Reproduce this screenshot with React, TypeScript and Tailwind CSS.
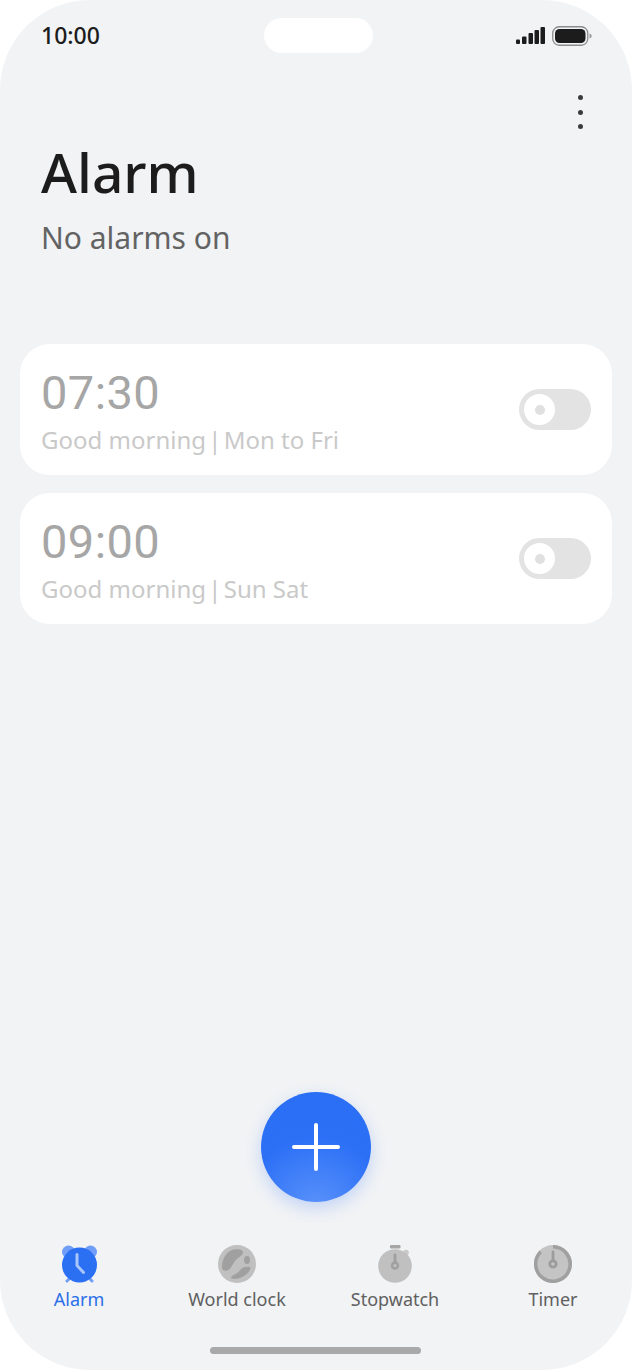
import React from "react"

const font = "font-['Noto_Sans',sans-serif]"

const StatusIcons = () => (
  <div className="flex items-center gap-[7px]">
    <svg width="29" height="17" viewBox="0 0 29 17" fill="#1c1c1c">
      <rect x="0" y="12.5" width="4" height="4.5" rx="1" />
      <rect x="6" y="9.5" width="4.5" height="7.5" rx="1" />
      <rect x="12.5" y="6" width="4.5" height="11" rx="1" />
      <rect x="18.5" y="3" width="4.5" height="14" rx="1" />
      <rect x="24.5" y="0" width="4.5" height="17" rx="1" />
    </svg>
    <svg width="40" height="20" viewBox="0 0 40 20">
      <rect x="0.75" y="0.75" width="35" height="18.5" rx="6.5" fill="none" stroke="#8b8b8b" strokeWidth="1.3" />
      <rect x="3" y="3" width="30.5" height="14" rx="4.5" fill="#1c1c1c" />
      <path d="M37.5 7.5c1.5.4 2.2 1.3 2.2 2.5s-.7 2.1-2.2 2.5z" fill="#9a9a9a" />
    </svg>
  </div>
)

const Toggle = () => (
  <div className="w-[72px] h-[41px] rounded-full bg-[#e3e3e3] flex items-center pl-[5px]">
    <div className="w-[31px] h-[31px] rounded-full bg-white flex items-center justify-center">
      <div className="w-[10px] h-[10px] rounded-full bg-[#e0e0e0]" />
    </div>
  </div>
)

const AlarmCard = ({ time, title, days }: { time: string; title: string; days: string }) => (
  <div className="h-[131px] rounded-[30px] bg-white pl-[21px] pr-[21px] flex items-center justify-between">
    <div className="flex flex-col pt-[3px]">
      <span className="text-[47px] leading-[52px] text-[#a6a6a6] font-['Roboto',sans-serif] font-[450] tracking-[0.4px]">
        {time}
      </span>
      <span className="mt-[6px] text-[24px] leading-[30px] text-[#c9c9c9]">
        {title}
        <span className="[word-spacing:-4px]"> | </span>
        {days}
      </span>
    </div>
    <Toggle />
  </div>
)

const AlarmIcon = () => (
  <svg width="38" height="38" viewBox="0 0 38 38">
    <circle cx="8.5" cy="7" r="6.5" fill="#6f9df8" />
    <circle cx="30.5" cy="7" r="6.5" fill="#6f9df8" />
    <path d="M7 36l4-4M32 36l-4-4" stroke="#6f9df8" strokeWidth="3" strokeLinecap="round" />
    <circle cx="19.5" cy="20" r="17.5" fill="#2b6ff2" />
    <path d="M17 9.5v11l6.5 7" fill="none" stroke="#a9c6fb" strokeWidth="3" strokeLinecap="round" strokeLinejoin="round" />
  </svg>
)

const GlobeIcon = () => (
  <svg width="38" height="38" viewBox="0 0 38 38">
    <circle cx="19" cy="19" r="19" fill="#c0c0c0" />
    <path d="M4 22C4 13 9 6 16 4.5C20 3.8 25 4.5 25 7C25 11 20 12 17 16C14 20 13 24 9.500 25.5C6 26.5 4 25 4 22z" fill="#a0a0a0" />
    <ellipse cx="29" cy="15" rx="3" ry="4" fill="#a0a0a0" />
    <path d="M13 32.5C15 29 19 29 21 26.5C23 24 24 22.5 27 22C30 21.5 33 21.5 32.5 23.5C31 28 27 31 22 33C19 34 13 34.5 13 32.5z" fill="#a0a0a0" />
  </svg>
)

const StopwatchIcon = () => (
  <svg width="38" height="38" viewBox="0 0 38 38">
    <rect x="14" y="0" width="10.5" height="3.5" rx="1" fill="#a6a6a6" />
    <circle cx="30" cy="7.5" r="2.8" fill="#c9c9c9" />
    <circle cx="19" cy="21" r="16.8" fill="#c0c0c0" />
    <path d="M19 10v8" stroke="#a0a0a0" strokeWidth="2.8" strokeLinecap="round" />
    <circle cx="19" cy="20.5" r="3" fill="none" stroke="#a0a0a0" strokeWidth="2.5" />
  </svg>
)

const TimerIcon = () => (
  <svg width="38" height="38" viewBox="0 0 38 38">
    <circle cx="19" cy="19" r="19" fill="#c4c4c4" />
    <path d="M19 1.8a17.2 17.2 0 1 1-12.2 5" fill="none" stroke="#a0a0a0" strokeWidth="3.5" />
    <path d="M19 7v10" stroke="#9c9c9c" strokeWidth="2.8" strokeLinecap="round" />
    <circle cx="19" cy="19" r="3.2" fill="#c4c4c4" stroke="#9c9c9c" strokeWidth="2.8" />
  </svg>
)

const tabs = [
  { label: "Alarm", icon: <AlarmIcon />, color: "text-[#2b6fe8]" },
  { label: "World clock", icon: <GlobeIcon />, color: "text-[#606060]" },
  { label: "Stopwatch", icon: <StopwatchIcon />, color: "text-[#606060]" },
  { label: "Timer", icon: <TimerIcon />, color: "text-[#606060]" },
]

export default function App() {
  return (
    <div className={`w-[632px] h-[1370px] bg-white overflow-hidden ${font}`}>
      <div className="h-full rounded-[90px] bg-[#f1f3f5] flex flex-col">
        {/* status bar */}
        <div className="pt-[18px] pl-[41px] pr-[40px] grid grid-cols-[223px_109px_1fr] items-center">
          <span className="text-[23px] leading-[35px] text-[#1c1c1c] font-medium">10:00</span>
          <div className="h-[35px] rounded-full bg-white" />
          <div className="flex justify-end">
            <StatusIcons />
          </div>
        </div>

        <div className="flex justify-end pr-[49px] mt-[42px]">
          <div className="flex flex-col gap-[9.5px]">
            <div className="w-[5px] h-[5px] rounded-full bg-[#3b3b3b]" />
            <div className="w-[5px] h-[5px] rounded-full bg-[#3b3b3b]" />
            <div className="w-[5px] h-[5px] rounded-full bg-[#3b3b3b]" />
          </div>
        </div>

        <div className="pl-[41px] mt-[11px]">
          <h1 className="text-[55px] leading-[64px] text-[#1c1c1c] font-medium">Alarm</h1>
          <p className="mt-[14px] text-[30px] leading-[40px] text-[#636363]">No alarms on</p>
        </div>

        <div className="px-[20px] mt-[86px] flex flex-col gap-[18px]">
          <AlarmCard time="07:30" title="Good morning" days="Mon to Fri" />
          <AlarmCard time="09:00" title="Good morning" days="Sun Sat" />
        </div>

        <div className="flex-1" />

        <div className="flex justify-center">
          <div className="w-[110px] h-[110px] rounded-full bg-[radial-gradient(circle_at_50%_105%,#5a92fb_0%,#2c70f6_55%,#2a6ef5_100%)] shadow-[0_6px_16px_rgba(60,120,250,0.25)] flex items-center justify-center">
            <svg width="48" height="48" viewBox="0 0 48 48">
              <path d="M24 2v44M2 24h44" stroke="white" strokeWidth="4" strokeLinecap="round" />
            </svg>
          </div>
        </div>

        <div className="mt-[43px] grid grid-cols-4">
          {tabs.map((t) => (
            <div key={t.label} className="flex flex-col items-center">
              <div className="h-[38px]">{t.icon}</div>
              <span className={`mt-[3px] text-[18px] leading-[26px] ${t.color}`}>{t.label}</span>
            </div>
          ))}
        </div>

        <div className="flex justify-center mt-[35px] mb-[16px] pr-[1px]">
          <div className="w-[211px] h-[7px] rounded-full bg-[#a9a9a9]" />
        </div>
      </div>
    </div>
  )
}
